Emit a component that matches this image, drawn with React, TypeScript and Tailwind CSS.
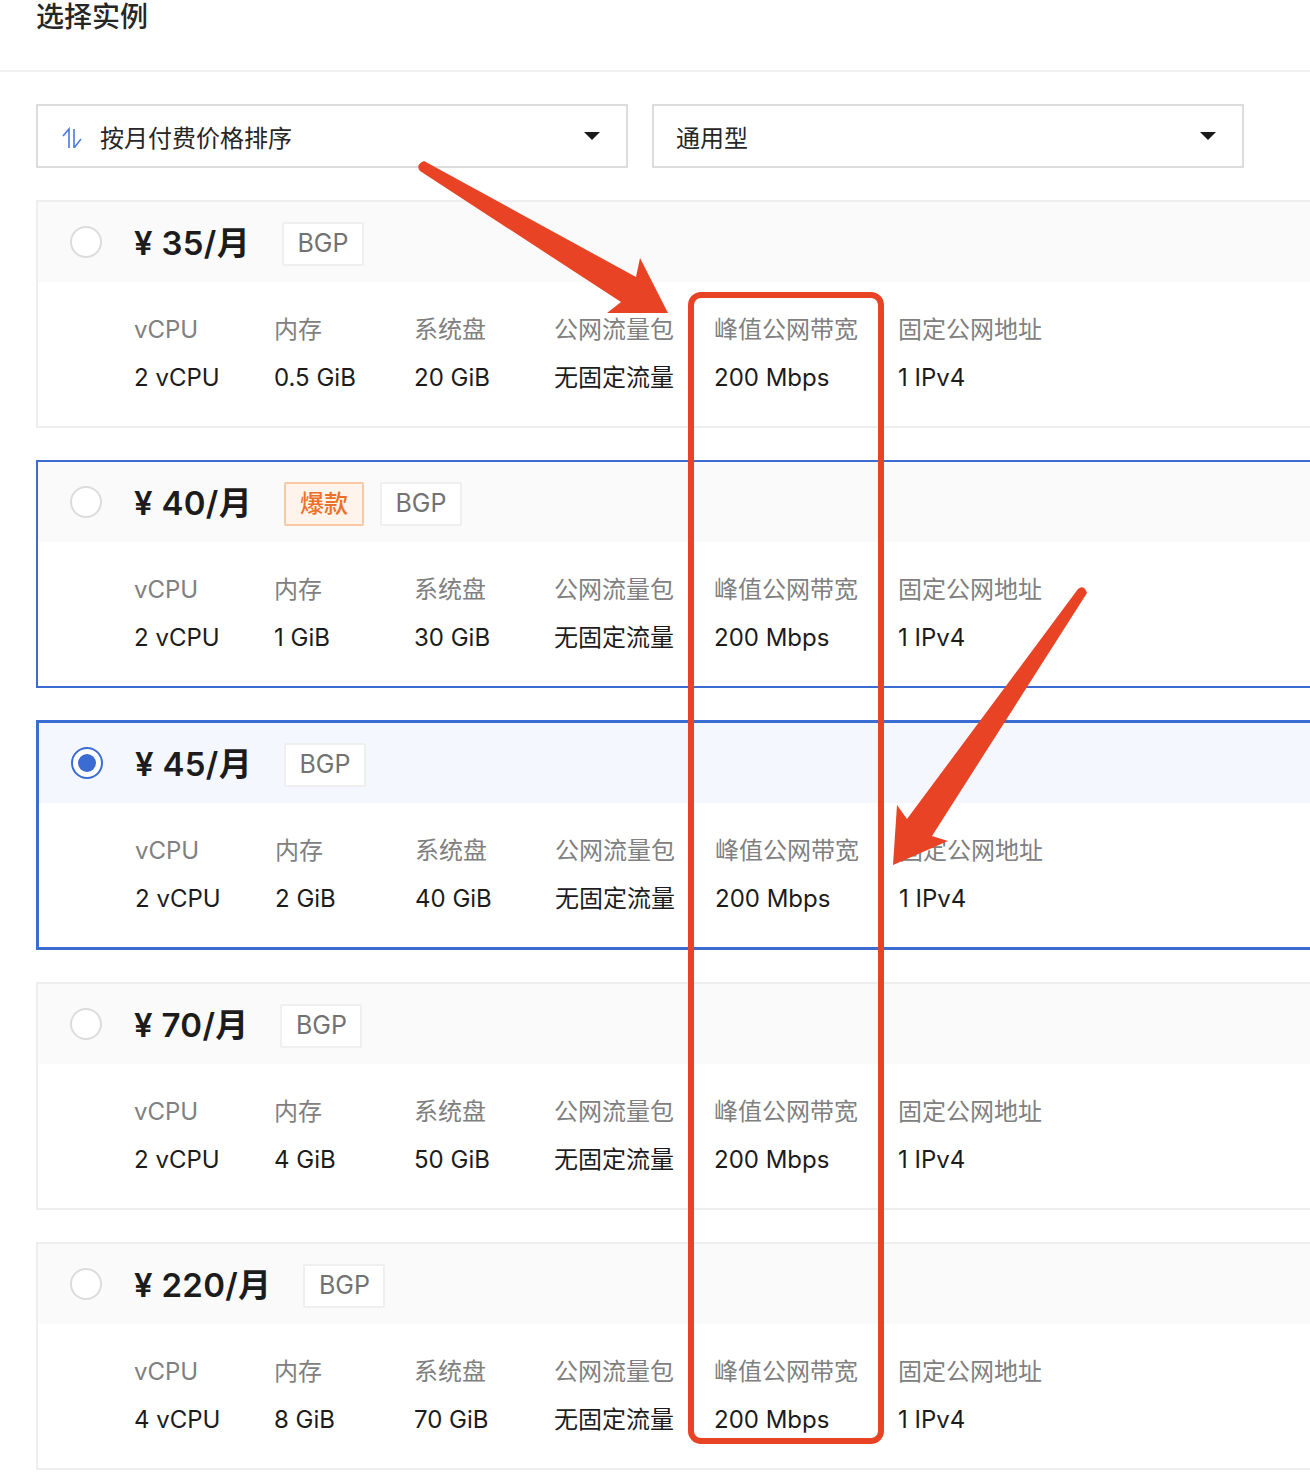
const FONT = "font-['Inter','Noto_Sans_CJK_SC',sans-serif]";

type Card = {
  price: string;
  hot?: boolean;
  vcpu: string;
  mem: string;
  disk: string;
  state: "idle" | "hover" | "selected";
};

const cards: Card[] = [
  { price: "¥ 35/月", vcpu: "2 vCPU", mem: "0.5 GiB", disk: "20 GiB", state: "idle" },
  { price: "¥ 40/月", hot: true, vcpu: "2 vCPU", mem: "1 GiB", disk: "30 GiB", state: "hover" },
  { price: "¥ 45/月", vcpu: "2 vCPU", mem: "2 GiB", disk: "40 GiB", state: "selected" },
  { price: "¥ 70/月", vcpu: "2 vCPU", mem: "4 GiB", disk: "50 GiB", state: "idle" },
  { price: "¥ 220/月", vcpu: "4 vCPU", mem: "8 GiB", disk: "70 GiB", state: "idle" },
];

function Col({ w, label, value }: { w: string; label: string; value: string }) {
  return (
    <div className={`${w} shrink-0`}>
      <div className="h-12 leading-[48px] text-[#808080] whitespace-nowrap">{label}</div>
      <div className="h-12 leading-[48px] text-[#1c1c1c] whitespace-nowrap">{value}</div>
    </div>
  );
}

function Tag({ children }: { children: string }) {
  return (
    <span className="h-11 w-[82px] flex items-center justify-center border-2 border-[#efefef] bg-white text-[25px] text-[#727272] rounded-[2px]">
      {children}
    </span>
  );
}

function InstanceCard({ card }: { card: Card }) {
  const border =
    card.state === "idle"
      ? "border-2 border-[#eeeeee]"
      : card.state === "hover"
        ? "border-2 border-[#3b6cd4]"
        : "border-[3px] border-[#3b6cd4]";
  const head = card.state === "selected" ? "bg-[#f4f7fe]" : "bg-[#fafafa]";
  return (
    <div className={`${border} border-r-0 w-[1400px] shrink-0 bg-white`}>
      <div className={`${head} h-20 flex items-center pl-8`}>
        {card.state === "selected" ? (
          <span className="w-8 h-8 rounded-full border-2 border-[#3b6cd4] bg-white flex items-center justify-center shrink-0">
            <span className="w-[18px] h-[18px] rounded-full bg-[#3b6cd4]" />
          </span>
        ) : (
          <span className="w-8 h-8 rounded-full border-2 border-[#dcdcdc] bg-white shrink-0" />
        )}
        <span className="ml-8 mt-0.5 text-[33px] tracking-[0.3px] font-semibold text-[#1c1c1c] whitespace-nowrap">{card.price}</span>
        <span className="ml-8 mt-1 flex gap-4">
          {card.hot && (
            <span className="h-11 w-20 flex items-center justify-center border-2 border-[#f8c9a6] bg-[#fff4ec] text-[#ee7028] font-medium rounded-[2px]">
              爆款
            </span>
          )}
          <Tag>BGP</Tag>
        </span>
      </div>
      <div className="flex pl-[96px] pt-6 pb-6">
        <Col w="w-[140px]" label="vCPU" value={card.vcpu} />
        <Col w="w-[140px]" label="内存" value={card.mem} />
        <Col w="w-[140px]" label="系统盘" value={card.disk} />
        <Col w="w-[160px]" label="公网流量包" value="无固定流量" />
        <Col w="w-[184px]" label="峰值公网带宽" value="200 Mbps" />
        <Col w="w-[184px]" label="固定公网地址" value="1 IPv4" />
      </div>
    </div>
  );
}

function Caret() {
  return (
    <svg width="16" height="8" viewBox="0 0 16 8" className="shrink-0">
      <path d="M0 0H16L8 8Z" fill="#1a1a1a" />
    </svg>
  );
}

export default function App() {
  return (
    <div className={`${FONT} relative w-[1310px] h-[1478px] overflow-hidden bg-white text-2xl`}>
      <div className="h-[72px] border-b-2 border-[#f0f0f0] pl-9">
        <h1 className="text-[28px] leading-[34px] font-medium text-[#262626]">选择实例</h1>
      </div>
      <div className="pl-9 pt-8 flex flex-col gap-8">
        <div className="flex gap-6">
          <div className="w-[592px] h-16 border-2 border-[#dcdcdc] flex items-center pl-[23px] pr-[26px] text-[#262626]">
            <svg width="22" height="22" viewBox="0 0 22 22" fill="none" stroke="#4a7bdc" strokeWidth="1.6" className="shrink-0 mt-0.5">
              <path d="M8 22V3L2 10" />
              <path d="M13 3V22L20 13" />
            </svg>
            <span className="ml-[17px] flex-1 pt-[5px]">按月付费价格排序</span>
            <Caret />
          </div>
          <div className="w-[592px] h-16 border-2 border-[#dcdcdc] flex items-center pl-[22px] pr-[26px] text-[#262626]">
            <span className="flex-1 pt-[5px]">通用型</span>
            <Caret />
          </div>
        </div>
        {cards.map((c) => (
          <InstanceCard key={c.price} card={c} />
        ))}
      </div>
      <svg className="absolute left-0 top-0 pointer-events-none" width="1310" height="1478" viewBox="0 0 1310 1478" fill="none">
        <rect x="691" y="295" width="190" height="1146" rx="10" stroke="#e94325" strokeWidth="6" />
        <path d="M424 161L636 277L640 258L668 313H607L621 302L420 171Q415 165 424 161Z" fill="#e94325" />
        <path d="M1078 589Q1084 584 1087 593L932 836L948 841L893 865L897 805L907 819Z" fill="#e94325" />
      </svg>
    </div>
  );
}
